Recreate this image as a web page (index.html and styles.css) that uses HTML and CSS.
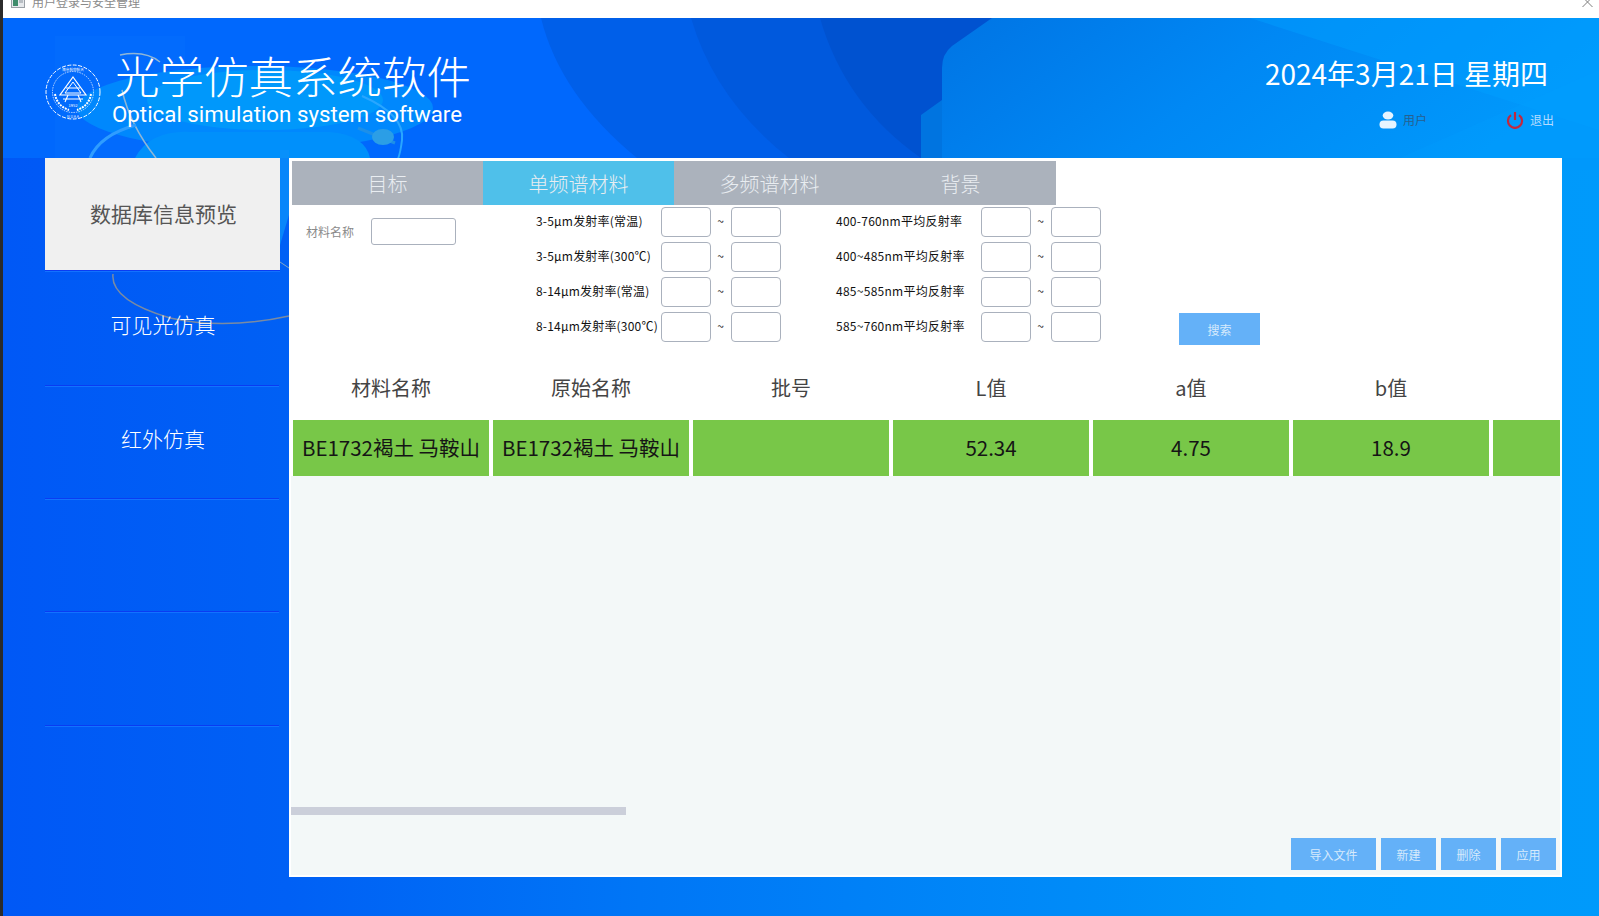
FILE: index.html
```html
<!DOCTYPE html>
<html lang="zh-CN">
<head>
<meta charset="utf-8">
<title>用户登录与安全管理</title>
<link rel="stylesheet" href="styles.css">
</head>
<body>
<div class="window">
  <svg class="art" viewBox="0 0 1599 916" aria-hidden="true">
    <defs>
      <linearGradient id="base" x1="0" y1="0" x2="1" y2="0">
        <stop offset="0" stop-color="#0058f6"/>
        <stop offset="0.18" stop-color="#0060f5"/>
        <stop offset="0.4" stop-color="#0076f6"/>
        <stop offset="0.8" stop-color="#0095f9"/>
        <stop offset="1" stop-color="#009afb"/>
      </linearGradient>
      <linearGradient id="hex" x1="0" y1="0" x2="1" y2="0.3">
        <stop offset="0" stop-color="#0074e4"/>
        <stop offset="0.5" stop-color="#0088f4"/>
        <stop offset="1" stop-color="#0098fb"/>
      </linearGradient>
    </defs>
    <rect width="1599" height="916" fill="url(#base)"/>
    <rect x="3" y="18" width="1000" height="140" fill="#0068fd"/>
    <rect x="55" y="36" width="130" height="122" fill="#0a78ff" opacity="0.22"/>
    <path d="M541 18Q560 95 637 158H1000V18Z" fill="#005fe9"/>
    <path d="M691 18Q715 100 789 158H1000V18Z" fill="#0059dd"/>
    <path d="M820 18Q845 105 921 158H1000V18Z" fill="#0052d0"/>
    <path d="M921 115L942 100V158H921Z" fill="#0074e0"/>
    <path d="M992 18L952 46Q942 54 942 68V170H1599V18Z" fill="url(#hex)"/>
    <path d="M1250 18L1599 130V18Z" fill="#00a0ff" opacity="0.45"/>
    <path d="M1400 158L1599 70V158Z" fill="#00a0ff" opacity="0.25"/>
    <ellipse cx="255" cy="108" rx="178" ry="42" fill="#0088fd"/>
    <ellipse cx="265" cy="100" rx="118" ry="30" fill="#0098fb"/>
    <path d="M135 158Q150 130 190 132H330Q365 135 370 158Z" fill="#0090fb"/>
    <path d="M120 55Q145 50 160 62M122 90Q130 125 156 158" fill="none" stroke="#8fb6d6" stroke-width="1.5"/>
    <path d="M90 158Q100 135 136 125" fill="none" stroke="#2f9dff" stroke-width="3"/>
    <path d="M362 96Q405 115 402 140T392 165" fill="none" stroke="#29a6ff" stroke-width="2"/>
    <path d="M358 128L395 143" stroke="#1d8fe8" stroke-width="3"/>
    <ellipse cx="383" cy="137" rx="11" ry="8" fill="#2b9ee6"/>
    <path d="M280 150H289V215L280 245Z" fill="#0a90fb" opacity="0.8"/>
    <path d="M280 262L289 268" stroke="#7fa6c8" stroke-width="1"/>
    <path d="M113 274Q110 300 170 318Q225 330 289 316" fill="none" stroke="#7a8ba2" stroke-width="1.5"/>
  </svg>

  <div class="strip"></div>

  <div class="app">
    <div class="titlebar">
      <svg class="title-icon" viewBox="0 0 14 10" aria-hidden="true">
        <rect x="0.5" y="0.5" width="13" height="9" fill="#e6e9ec" stroke="#9aa0a6"/>
        <rect x="2" y="2" width="5" height="6" fill="#3f8c6c"/>
        <rect x="8" y="2" width="4" height="3" fill="#b8bec4"/>
      </svg>
      <span class="title-text">用户登录与安全管理</span>
      <svg class="title-close" viewBox="0 0 11 7" aria-hidden="true">
        <path d="M0.5 -3L10.5 7M10.5 -3L0.5 7" stroke="#7d7d7d" fill="none"/>
      </svg>
    </div>

    <header class="header">
      <svg class="logo" viewBox="0 0 56 56" aria-hidden="true">
        <g fill="none" stroke="#fff">
          <circle cx="28" cy="28" r="27" stroke-width="1" stroke-dasharray="4 1.5"/>
          <circle cx="28" cy="28" r="20.5" stroke-width="0.7" stroke-dasharray="1.5 1"/>
          <path d="M28 13L41 31H15Z" stroke-width="1.2"/>
          <path d="M28 18L36 29H20Z" stroke-width="1"/>
          <path d="M21 24H35M18 35H38M23 31L20 38M33 31L36 38" stroke-width="1.1"/>
          <path d="M10 30Q12 42 24 46M46 30Q44 42 32 46" stroke-width="2" stroke-dasharray="2 1"/>
        </g>
        <text class="logo-year" x="28" y="43">1952</text>
        <text class="logo-name" x="28" y="54">N U A A</text>
        <text class="logo-name" x="28" y="7">南京航空航天</text>
      </svg>
      <div class="brand">
        <div class="brand-cn">光学仿真系统软件</div>
        <div class="brand-en">Optical simulation system software</div>
      </div>
      <div class="status">
        <div class="date">2024年3月21日 星期四</div>
        <div class="session">
          <span class="session-item session-user">
            <svg class="session-icon" viewBox="0 0 18 18" aria-hidden="true">
              <ellipse cx="9" cy="4.5" rx="5.3" ry="4" fill="#e6f4ff"/>
              <rect x="0.5" y="9.5" width="17" height="8" rx="4" fill="#e6f4ff"/>
            </svg>
            用户
          </span>
          <span class="session-item session-exit">
            <svg class="session-icon" viewBox="0 0 18 18" aria-hidden="true">
              <path d="M5 4.2A7 7 0 1 0 13 4.2" fill="none" stroke="#c2283e" stroke-width="2.2"/>
              <path d="M9 1V9" stroke="#c2283e" stroke-width="2.2"/>
            </svg>
            退出
          </span>
        </div>
      </div>
    </header>

    <div class="workspace">
      <nav class="sidebar">
        <a class="nav-item active">数据库信息预览</a>
        <a class="nav-item">可见光仿真</a>
        <a class="nav-item">红外仿真</a>
        <a class="nav-item"></a>
        <a class="nav-item"></a>
      </nav>

      <main class="panel">
        <div class="top">
          <div class="tabs">
            <div class="tab">目标</div>
            <div class="tab selected">单频谱材料</div>
            <div class="tab">多频谱材料</div>
            <div class="tab">背景</div>
          </div>

          <div class="filter">
            <div class="name-group">
              <span class="name-label">材料名称</span>
              <input class="name-input" type="text">
            </div>
            <div class="ranges">
              <div class="range"><span class="range-label">3-5μm发射率(常温)</span><input class="box" type="text"><span class="tilde">~</span><input class="box" type="text"></div>
              <div class="range"><span class="range-label">3-5μm发射率(300℃)</span><input class="box" type="text"><span class="tilde">~</span><input class="box" type="text"></div>
              <div class="range"><span class="range-label">8-14μm发射率(常温)</span><input class="box" type="text"><span class="tilde">~</span><input class="box" type="text"></div>
              <div class="range"><span class="range-label">8-14μm发射率(300℃)</span><input class="box" type="text"><span class="tilde">~</span><input class="box" type="text"></div>
            </div>
            <div class="ranges ranges-wide">
              <div class="range"><span class="range-label">400-760nm平均反射率</span><input class="box" type="text"><span class="tilde">~</span><input class="box" type="text"></div>
              <div class="range"><span class="range-label">400~485nm平均反射率</span><input class="box" type="text"><span class="tilde">~</span><input class="box" type="text"></div>
              <div class="range"><span class="range-label">485~585nm平均反射率</span><input class="box" type="text"><span class="tilde">~</span><input class="box" type="text"></div>
              <div class="range"><span class="range-label">585~760nm平均反射率</span><input class="box" type="text"><span class="tilde">~</span><input class="box" type="text"></div>
            </div>
            <button class="btn btn-search">搜索</button>
          </div>

          <div class="table table-head">
            <div class="th">材料名称</div>
            <div class="th">原始名称</div>
            <div class="th">批号</div>
            <div class="th">L值</div>
            <div class="th">a值</div>
            <div class="th">b值</div>
            <div class="th"></div>
          </div>
          <div class="table table-row">
            <div class="td">BE1732褐土 马鞍山</div>
            <div class="td">BE1732褐土 马鞍山</div>
            <div class="td"></div>
            <div class="td">52.34</div>
            <div class="td">4.75</div>
            <div class="td">18.9</div>
            <div class="td"></div>
          </div>
        </div>

        <div class="lower">
          <div class="scroll-thumb"></div>
          <div class="actions">
            <button class="btn btn-wide">导入文件</button>
            <button class="btn">新建</button>
            <button class="btn">删除</button>
            <button class="btn">应用</button>
          </div>
        </div>
      </main>
    </div>
  </div>
</div>
</body>
</html>
```

FILE: styles.css
```css
* { box-sizing: border-box; }

html, body {
  margin: 0;
  padding: 0;
  height: 100%;
  overflow: hidden;
}

body {
  font-family: "Noto Sans CJK SC", "Noto Sans", sans-serif;
}

.window {
  position: relative;
  display: flex;
  width: 1599px;
  height: 916px;
  overflow: hidden;
}

.art {
  position: absolute;
  inset: 0;
  width: 1599px;
  height: 916px;
}

.strip {
  position: relative;
  flex: none;
  width: 3px;
  background: #2b2b2b;
}

.app {
  position: relative;
  flex: 1;
  display: flex;
  flex-direction: column;
  min-width: 0;
}

/* title bar, cut off at the top of the picture */
.titlebar {
  flex: none;
  display: flex;
  align-items: flex-end;
  height: 18px;
  padding: 0 6px 10px 8px;
  background: #fff;
  overflow: hidden;
}

.title-icon {
  flex: none;
  width: 14px;
  height: 10px;
}

.title-text {
  margin-left: 7px;
  font-size: 12px;
  line-height: 12px;
  color: #8a8a8a;
}

.title-close {
  flex: none;
  width: 11px;
  height: 7px;
  margin-left: auto;
  margin-bottom: 1px;
  overflow: visible;
}

/* header */
.header {
  flex: none;
  display: flex;
  height: 140px;
  padding: 46px 51px 0 42px;
  color: #fff;
}

.logo {
  flex: none;
  width: 56px;
  height: 56px;
}

.logo-year {
  font-size: 4px;
  fill: #fff;
  text-anchor: middle;
}

.logo-name {
  font-size: 3.6px;
  fill: #fff;
  text-anchor: middle;
}

.brand {
  display: flex;
  flex-direction: column;
  margin: -14px 0 0 11px;
}

.brand-cn {
  font-size: 44.5px;
  line-height: 50px;
  font-weight: 300;
  white-space: nowrap;
  margin-left: 3px;
}

.brand-en {
  font-family: Roboto, "Noto Sans", sans-serif;
  font-size: 22.3px;
  line-height: 28px;
  white-space: nowrap;
}

.status {
  margin-left: auto;
  margin-top: -11px;
  display: flex;
  flex-direction: column;
  align-items: flex-end;
}

.date {
  font-size: 28px;
  line-height: 40px;
  white-space: nowrap;
}

.session {
  display: flex;
  margin-top: 18px;
  margin-right: -6px;
  gap: 79px;
}

.session-item {
  display: flex;
  align-items: center;
  gap: 6px;
  font-size: 12px;
  line-height: 18px;
}

.session-user { color: #27608f; }
.session-exit { color: #b5dcff; }

.session-icon {
  flex: none;
  width: 18px;
  height: 18px;
}

/* body */
.workspace {
  flex: 1;
  display: flex;
  min-height: 0;
  padding: 0 37px 39px 42px;
  gap: 9px;
}

.sidebar {
  flex: none;
  width: 235px;
  display: grid;
  grid-template-rows: 114px 115px 113px 113px 114px;
  align-content: start;
}

.nav-item {
  display: flex;
  align-items: center;
  justify-content: center;
  margin: 0 1px 1px 0;
  padding: 0 0 9px 2px;
  font-size: 21px;
  color: #fff;
  font-weight: 300;
  border-bottom: 1px solid #0a3cf2;
  box-shadow: 0 1px 0 #1272ff;
}

.nav-item.active {
  margin-right: 0;
  padding: 0 0 3px 2px;
  background: #f0f0f0;
  color: #555;
  font-weight: 400;
}

/* main panel */
.panel {
  flex: 1;
  min-width: 0;
  display: flex;
  flex-direction: column;
  border: 2px solid #fff;
  background: #fff;
}

.top {
  flex: none;
  background: #fff;
  padding-top: 1px;
}

.tabs {
  display: flex;
  margin-left: 1px;
}

.tab {
  flex: none;
  width: 191px;
  height: 44px;
  line-height: 46px;
  text-align: center;
  font-size: 20px;
  font-weight: 300;
  color: #e9edf1;
  background: #abb2bc;
}

.tab.selected {
  background: #4fc0ea;
}

.filter {
  display: flex;
  height: 140px;
  margin-top: 2px;
  padding-left: 15px;
}

.name-group {
  flex: none;
  display: flex;
  align-items: center;
  align-self: flex-start;
  width: 230px;
  margin-top: 11px;
}

.name-label {
  width: 65px;
  font-size: 12px;
  color: #8a8a8a;
}

.name-input {
  width: 85px;
  height: 27px;
  padding: 0;
  border: 1px solid #aab1bd;
  border-radius: 3px;
  background: #fff;
}

.ranges {
  flex: none;
  width: 300px;
}

.ranges-wide {
  width: 343px;
}

.range {
  display: flex;
  height: 35px;
  align-items: flex-start;
}

.range-label {
  flex: none;
  width: 125px;
  padding-top: 4px;
  font-size: 12px;
  line-height: 20px;
  letter-spacing: 0.2px;
  color: #111;
  white-space: nowrap;
}

.ranges-wide .range-label {
  width: 145px;
  letter-spacing: 0.27px;
}

.box {
  flex: none;
  width: 50px;
  height: 30px;
  padding: 0;
  border: 1px solid #aab1bd;
  border-radius: 4px;
  background: #fff;
}

.tilde {
  flex: none;
  width: 19px;
  margin-right: 1px;
  padding-top: 4px;
  text-align: center;
  font-size: 12px;
  line-height: 20px;
  color: #222;
}

.btn {
  flex: none;
  width: 55px;
  height: 32px;
  padding: 0;
  border: 0;
  background: #64b1f8;
  color: #d6eafc;
  font-family: inherit;
  font-size: 12px;
}

.btn-search {
  width: 81px;
  align-self: flex-end;
  margin-bottom: 2px;
}

.btn-wide {
  width: 85px;
}

/* table */
.table {
  display: grid;
  grid-template-columns: repeat(6, 196px) 67px;
  gap: 4px;
  padding-left: 2px;
}

.table-head {
  margin-top: 13px;
  margin-bottom: 4px;
}

.th {
  height: 56px;
  line-height: 56px;
  text-align: center;
  font-size: 20px;
  color: #444;
}

.td {
  height: 56px;
  line-height: 54px;
  text-align: center;
  font-size: 20.5px;
  color: #151515;
  background: #78c748;
  white-space: nowrap;
}

/* lower empty area */
.lower {
  flex: 1;
  min-height: 0;
  background: #f3f8f8;
  padding-top: 331px;
}

.scroll-thumb {
  width: 335px;
  height: 8px;
  background: #cbcfda;
}

.actions {
  display: flex;
  justify-content: flex-end;
  gap: 5px;
  margin-top: 23px;
  padding-right: 4px;
}
```
